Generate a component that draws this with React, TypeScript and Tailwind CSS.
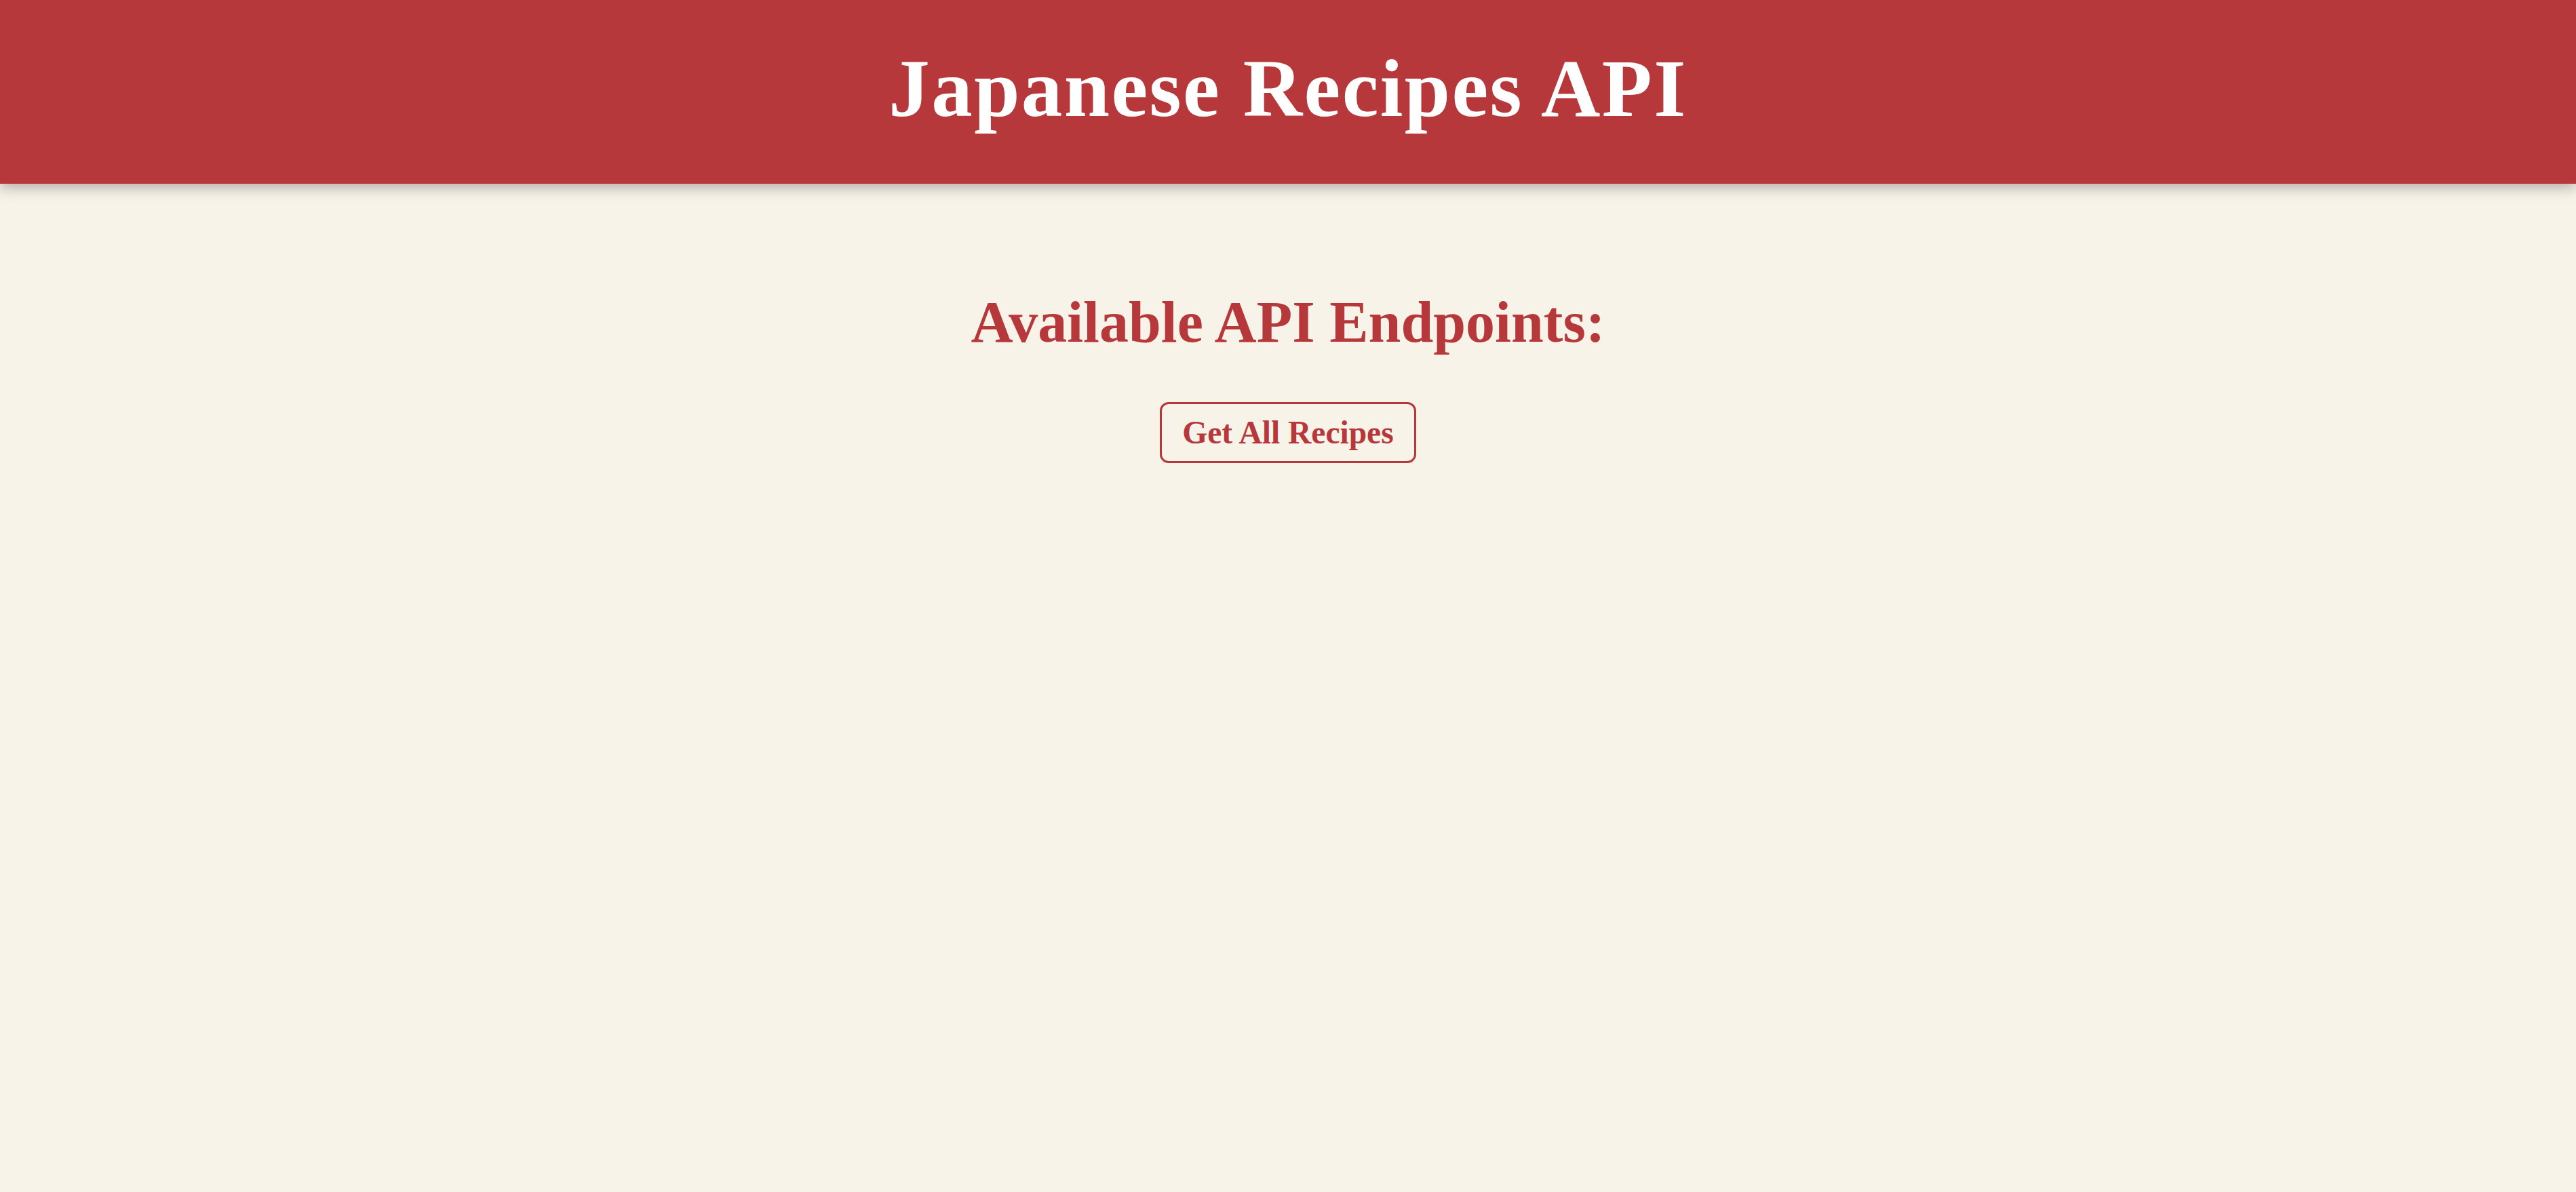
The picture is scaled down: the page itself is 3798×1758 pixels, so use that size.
export default function App() {
  return (
    <div className="min-h-screen bg-[#f7f3e9] font-['Liberation_Serif','Times_New_Roman',serif]">
      <header className="relative z-10 h-[271px] bg-[#b7383b] pt-[61px] shadow-[0_5px_20px_rgba(0,0,0,0.3)]">
        <h1 className="text-center text-[121px] font-bold leading-[normal] tracking-[2.4px] text-white">Japanese Recipes API</h1>
      </header>

      <main className="flex flex-col items-center">
        <h2 className="mt-[154px] text-[86px] font-bold leading-[normal] text-[#b7383b]">Available API Endpoints:</h2>
        <button className="mt-[68px] rounded-[13px] border-[3px] border-[#b7383b] px-[30px] py-[15px] text-[47.5px] font-bold leading-[normal] text-[#b7383b]">
          Get All Recipes
        </button>
      </main>
    </div>
  );
}
